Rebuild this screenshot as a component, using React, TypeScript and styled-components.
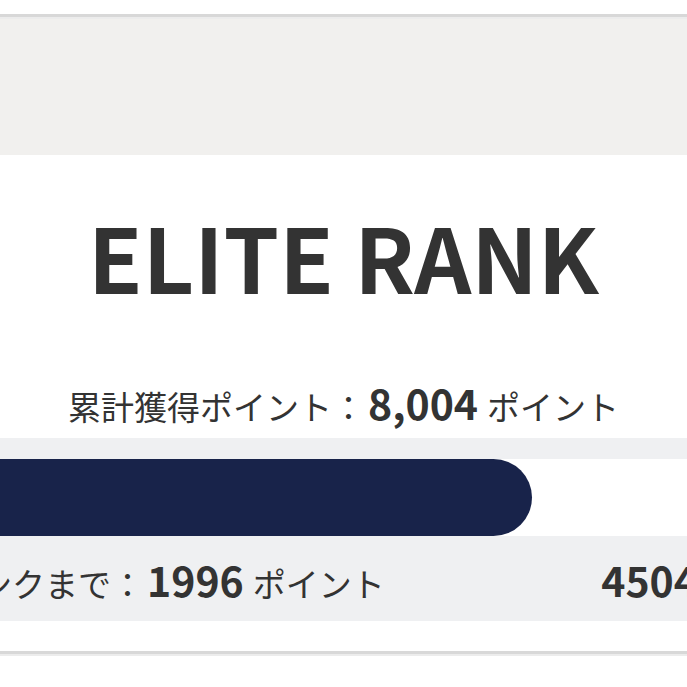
import React from 'react';
import styled, { createGlobalStyle } from 'styled-components';

const GlobalStyle = createGlobalStyle`
  html, body {
    margin: 0;
    padding: 0;
    background: #ffffff;
    overflow: hidden;
  }
  body {
    font-family: "Noto Sans CJK JP", "Noto Sans", sans-serif;
    color: #333333;
  }
`;

// the screenshot is a crop of a wider page, so the page is wider than the window
const Page = styled.div`
  width: 1087px;
  margin-left: -200px;
  padding-top: 14px;
`;

const Rule = styled.div`
  height: 3px;
  background: #d8d8d8;
  border-bottom: 2px solid #ececec;
`;

const Banner = styled.div`
  height: 136px;
  background: #f1f0ee;
`;

const Card = styled.section`
  background: #ffffff;
  padding-top: 56px;
`;

const Title = styled.h1`
  margin: 0;
  font-size: 89px;
  line-height: 1;
  font-weight: 700;
  text-align: center;
  letter-spacing: 0;
`;

const Total = styled.p`
  margin: 79px 0 0;
  font-size: 33px;
  line-height: 46px;
  text-align: center;
`;

const Num = styled.strong`
  font-size: 41px;
  font-weight: 700;
  margin: 0 9px 0 3px;
`;

const Progress = styled.div`
  margin-top: 9px;
  background: #eff0f2;
  padding-top: 21px;
`;

const Track = styled.div`
  width: 915px;
  height: 77px;
  background: #ffffff;
`;

const Fill = styled.div<{ $percent: number }>`
  width: ${(p) => p.$percent}%;
  height: 100%;
  background: #18234a;
  border-radius: 0 39px 39px 0;
`;

const Row = styled.div`
  height: 85px;
  display: flex;
  align-items: center;
  justify-content: space-between;
  padding: 0 48px 0 80px;
  font-size: 33px;
`;

const Value = styled.span``;

const Spacer = styled.div`
  height: 30px;
  background: #ffffff;
`;

export default function App() {
  const total = 8004;
  const toNext = 1996;
  const percent = (total / (total + toNext)) * 100;

  return (
    <>
      <GlobalStyle />
      <Page>
        <Rule />
        <Banner />
        <Card>
          <Title>ELITE RANK</Title>
          <Total>
            累計獲得ポイント：<Num>{total.toLocaleString('en-US')}</Num>ポイント
          </Total>
          <Progress>
            <Track>
              <Fill $percent={percent} />
            </Track>
            <Row>
              <Value>
                次のランクまで：<Num>{toNext}</Num>ポイント
              </Value>
              <Value>
                <Num>4504</Num>ポイント
              </Value>
            </Row>
          </Progress>
          <Spacer />
          <Rule />
        </Card>
      </Page>
    </>
  );
}
